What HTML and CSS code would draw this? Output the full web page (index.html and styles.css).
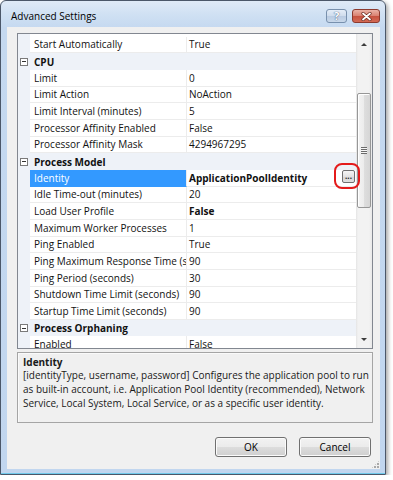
FILE: index.html
```html
<!DOCTYPE html>
<html>
<head>
<meta charset="utf-8">
<title>Advanced Settings</title>
<link rel="stylesheet" href="styles.css">
</head>
<body>
<div class="window">
  <div class="titlebar">
    <span class="title">Advanced Settings</span>
    <div class="caps">
      <span class="cap help">?</span>
      <span class="cap close"><svg width="11" height="9" viewBox="0 0 11 9"><path d="M2 1.5 L9 7.5 M9 1.5 L2 7.5" stroke="#6a2a20" stroke-width="3.2" stroke-linecap="round"/><path d="M2 1.5 L9 7.5 M9 1.5 L2 7.5" stroke="#fff" stroke-width="1.8" stroke-linecap="round"/></svg></span>
    </div>
  </div>
  <div class="client">
    <div class="grid">
      <div class="rows">
        <div class="row"><span class="gut"></span><span class="name">Start Automatically</span><span class="val">True</span></div>
        <div class="row cat"><span class="gut"><i class="exp"></i></span><span class="label">CPU</span></div>
        <div class="row"><span class="gut"></span><span class="name">Limit</span><span class="val">0</span></div>
        <div class="row"><span class="gut"></span><span class="name">Limit Action</span><span class="val">NoAction</span></div>
        <div class="row"><span class="gut"></span><span class="name">Limit Interval (minutes)</span><span class="val">5</span></div>
        <div class="row"><span class="gut"></span><span class="name">Processor Affinity Enabled</span><span class="val">False</span></div>
        <div class="row"><span class="gut"></span><span class="name">Processor Affinity Mask</span><span class="val">4294967295</span></div>
        <div class="row cat"><span class="gut"><i class="exp"></i></span><span class="label">Process Model</span></div>
        <div class="row"><span class="gut"></span><span class="name sel">Identity</span><span class="val"><b>ApplicationPoolIdentity</b><span class="ellwrap"><span class="ellbtn">...</span><span class="annot"></span></span></span></div>
        <div class="row"><span class="gut"></span><span class="name">Idle Time-out (minutes)</span><span class="val">20</span></div>
        <div class="row"><span class="gut"></span><span class="name">Load User Profile</span><span class="val"><b>False</b></span></div>
        <div class="row"><span class="gut"></span><span class="name">Maximum Worker Processes</span><span class="val">1</span></div>
        <div class="row"><span class="gut"></span><span class="name">Ping Enabled</span><span class="val">True</span></div>
        <div class="row"><span class="gut"></span><span class="name">Ping Maximum Response Time (seconds)</span><span class="val">90</span></div>
        <div class="row"><span class="gut"></span><span class="name">Ping Period (seconds)</span><span class="val">30</span></div>
        <div class="row"><span class="gut"></span><span class="name">Shutdown Time Limit (seconds)</span><span class="val">90</span></div>
        <div class="row"><span class="gut"></span><span class="name">Startup Time Limit (seconds)</span><span class="val">90</span></div>
        <div class="row cat"><span class="gut"><i class="exp"></i></span><span class="label">Process Orphaning</span></div>
        <div class="row"><span class="gut"></span><span class="name">Enabled</span><span class="val">False</span></div>
      </div>
      <div class="vscroll">
        <div class="sbtn"><i class="arr up"></i></div>
        <div class="track"><div class="thumb"><i class="griplines"></i></div></div>
        <div class="sbtn"><i class="arr down"></i></div>
      </div>
    </div>
    <div class="desc">
      <div class="desc-title">Identity</div>
      <div class="desc-text">[identityType, username, password] Configures the application pool to run<br>as built-in account, i.e. Application Pool Identity (recommended), Network<br>Service, Local System, Local Service, or as a specific user identity.</div>
    </div>
    <div class="buttons">
      <button class="btn">OK</button>
      <button class="btn">Cancel</button>
    </div>
    <div class="grip"></div>
  </div>
</div>
</body>
</html>
```

FILE: styles.css
```css
* { box-sizing: border-box; }

body {
  margin: 0;
  background: #fff;
  font-family: "Open Sans", "Noto Sans", sans-serif;
  font-size: 10px;
  color: #111;
}

.window {
  width: 386px;
  height: 475px;
  border: 1px solid #4b5769;
  border-radius: 6px 6px 0 0;
  background: linear-gradient(#dfeaf7 0, #cfe0f3 14px, #c5d9f0 27px, #c1d6ef 100%);
  box-shadow: 2px 2px 4px rgba(0, 0, 0, 0.35), inset 0 -1px 0 #6fc9ea;
  padding: 0 5px 5px 6px;
  display: flex;
  flex-direction: column;
}

.titlebar {
  height: 26px;
  flex: none;
  display: flex;
  align-items: flex-start;
  justify-content: space-between;
}

.title {
  margin: 8px 0 0 4px;
  font-size: 10px;
  line-height: 14px;
  color: #000;
}

.caps {
  display: flex;
  gap: 5px;
  margin-top: 8px;
}

.cap {
  height: 14px;
  border-radius: 3px;
  display: flex;
  align-items: center;
  justify-content: center;
}

.help {
  width: 21px;
  border: 1px solid #7890ad;
  background: linear-gradient(#e4edf8 0, #cfdcec 50%, #b9cbe2 51%, #c9d8ea 100%);
  color: #fff;
  font-weight: bold;
  font-size: 11px;
  line-height: 12px;
  text-shadow: 0 0 1px #4a6285, 0 0 1px #4a6285;
}

.close {
  width: 28px;
  border: 1px solid #8c3a2e;
  background: linear-gradient(#eab2a6 0, #d98070 50%, #c6513f 51%, #d36a55 100%);
}

.client {
  flex: 1;
  background: #f0f0f0;
  display: flex;
  flex-direction: column;
  padding: 0 7px 0 10px;
}

.grid {
  margin-top: 6px;
  height: 316px;
  flex: none;
  border: 1px solid #828790;
  background: #fff;
  display: flex;
}

.rows {
  flex: 1;
  padding-top: 2.67px;
  overflow-x: visible;
  overflow-y: clip;
  background: linear-gradient(to right, #eef2f8 12px, #fff 12px);
}

.row {
  height: calc(50px / 3);
  display: flex;
  line-height: 14px;
}

.gut {
  width: 12px;
  flex: none;
  display: flex;
  align-items: center;
}

.name {
  width: 157px;
  flex: none;
  padding-left: 4px;
  border-right: 1px solid #ececec;
  border-bottom: 1px solid #ececec;
  white-space: nowrap;
  overflow: hidden;
  display: flex;
  align-items: center;
}

.name.sel {
  background: #3399ff;
  color: #fff;
  border-bottom-color: #3399ff;
}

.val {
  flex: 1;
  padding-left: 2px;
  border-bottom: 1px solid #ececec;
  display: flex;
  align-items: center;
  justify-content: space-between;
  white-space: nowrap;
}

.cat {
  background: #eef2f8;
}

.label {
  padding-left: 4px;
  font-weight: bold;
  display: flex;
  align-items: center;
}

.exp {
  width: 8px;
  height: 8px;
  margin-left: 2px;
  border: 1px solid #7a7a7a;
  background: #fff linear-gradient(#333, #333) center / 4px 1px no-repeat;
}

.ellwrap {
  position: relative;
  align-self: flex-start;
  margin-right: 1px;
}

.ellbtn {
  display: block;
  width: 13px;
  height: 13px;
  border: 1px solid #707070;
  border-radius: 2px;
  background: linear-gradient(#f6f6f6, #e3e3e3 50%, #d6d6d6 51%, #e0e0e0);
  font-size: 8px;
  line-height: 9px;
  text-align: center;
  color: #222;
  font-weight: bold;
}

.annot {
  position: absolute;
  left: -8px;
  top: -7px;
  width: 26px;
  height: 26px;
  border: 2px solid #e41b1b;
  border-radius: 8px;
  z-index: 2;
}

.vscroll {
  width: 16px;
  flex: none;
  display: flex;
  flex-direction: column;
  background: linear-gradient(to right, #e4e4e4 0, #f2f2f2 2px, #f2f2f2 13px, #e9e9e9 16px);
}

.sbtn {
  height: 18px;
  flex: none;
  display: flex;
  align-items: center;
  justify-content: center;
}

.arr {
  width: 0;
  height: 0;
  border-left: 3px solid transparent;
  border-right: 3px solid transparent;
}

.arr.up { border-bottom: 3px solid #3c3c3c; margin-top: 2px; }
.arr.down { border-top: 3px solid #3c3c3c; }

.track {
  flex: 1;
}

.thumb {
  margin: 41px 1px 0 1px;
  height: 115px;
  border: 1px solid #979797;
  border-radius: 2px;
  background: linear-gradient(to right, #f4f4f4 0, #ececec 50%, #dedede 51%, #d6d6d6 100%);
  box-shadow: inset 1px 1px 0 #fff;
  display: flex;
  align-items: center;
  justify-content: center;
}

.griplines {
  width: 6px;
  height: 7px;
  background: repeating-linear-gradient(#6b6b6b 0 1px, #f6f6f6 1px 2px);
}

.desc {
  margin-top: 3px;
  height: 71px;
  flex: none;
  border: 1px solid #a5a5a5;
  box-shadow: inset 1px 1px 0 #fafafa;
  padding: 2px 5px;
  color: #1a1a1a;
}

.desc-title {
  font-weight: bold;
  line-height: 14px;
}

.desc-text {
  line-height: 13.8px;
  white-space: nowrap;
}

.buttons {
  margin-top: 14px;
  display: flex;
  justify-content: flex-end;
  gap: 12px;
  padding-right: 2px;
}

.btn {
  width: 72px;
  height: 20px;
  border: 1px solid #707070;
  border-radius: 3px;
  background: linear-gradient(#f2f2f2 0, #ebebeb 50%, #dddddd 50%, #cfcfcf 100%);
  box-shadow: inset 0 0 0 1px #fbfbfb;
  font-family: "Open Sans", "Noto Sans", sans-serif;
  font-size: 10px;
  color: #000;
  padding: 0;
}

.grip {
  margin-top: auto;
  margin-right: -7px;
  align-self: flex-end;
  width: 9px;
  height: 9px;
  background:
    radial-gradient(circle at 1px 1px, #a9a9a9 0.8px, transparent 1.1px) 0 0 / 3px 3px;
  clip-path: polygon(100% 0, 100% 100%, 0 100%);
}
```
